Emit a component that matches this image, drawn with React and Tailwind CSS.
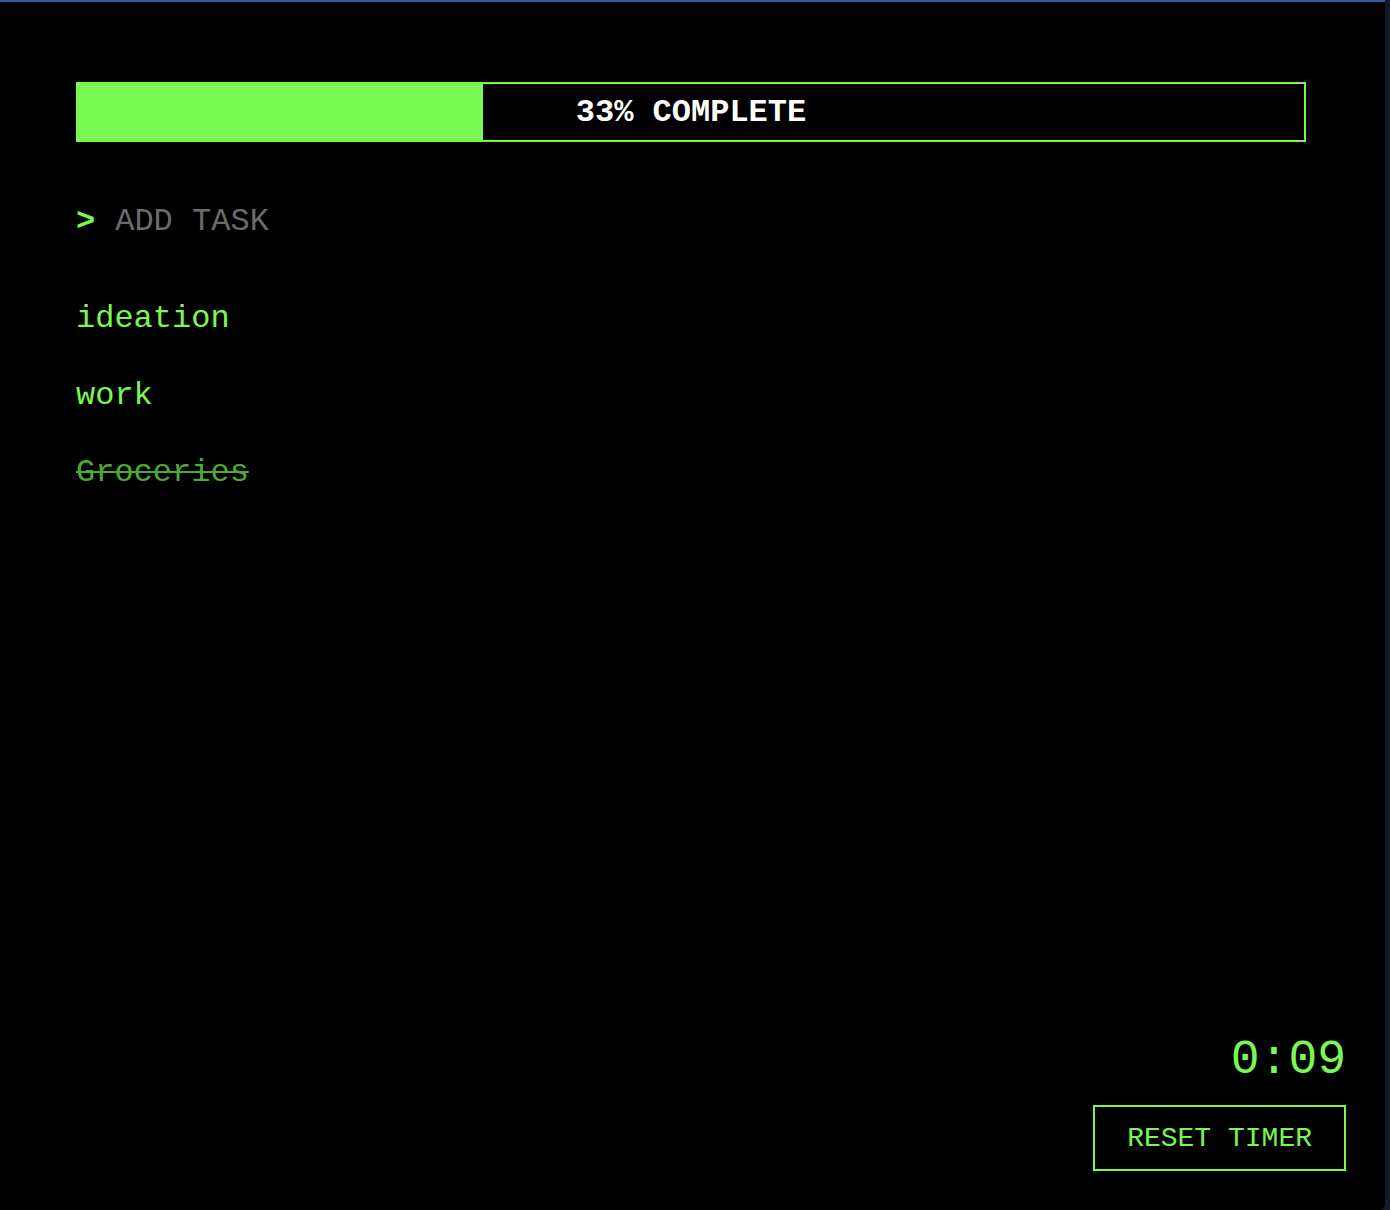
import React, { useState } from 'react';

const GREEN = 'text-[#78f850]';

const App = () => {
    const [tasks] = useState([
        { id: 1, title: 'ideation', done: false },
        { id: 2, title: 'work', done: false },
        { id: 3, title: 'Groceries', done: true },
    ]);

    const doneCount = tasks.filter((t) => t.done).length;
    const percent = Math.round((doneCount / tasks.length) * 100);

    return (
        <div className="min-h-screen bg-[#111a2a] flex font-['Liberation_Mono','Courier_New',monospace]">
            <div className="w-[1385px] h-[1210px] bg-black border-t-2 border-[#2f5da6] rounded-br-[6px] flex flex-col pt-[80px] pl-[76px] pr-[39px] pb-[39px]">

                {/* Progress */}
                <div className="relative w-[1230px] h-[60px] border-2 border-[#78f850]">
                    <div className="absolute top-0 bottom-0 left-0 bg-[#78f850]" style={{ width: `${percent}%` }}></div>
                    <div className="relative h-full flex items-center justify-center pt-[2px] text-white font-bold text-[32px] leading-[36px]">
                        {percent}% COMPLETE
                    </div>
                </div>

                {/* Add task */}
                <div className="mt-[62px] flex items-center text-[32px] leading-[36px]">
                    <span className={`${GREEN} font-bold`}>&gt;</span>
                    <input
                        className="ml-[20px] flex-1 bg-transparent outline-none text-[32px] leading-[36px] text-[#78f850] placeholder:text-[#6b6b6b] font-['Liberation_Mono','Courier_New',monospace]"
                        placeholder="ADD TASK"
                    />
                </div>

                {/* Task list */}
                <div className="mt-[61px] flex flex-col gap-[41px] flex-1">
                    {tasks.map((task) => (
                        <div
                            key={task.id}
                            className={`text-[32px] leading-[36px] ${task.done ? 'text-[#4caa35] line-through decoration-2' : GREEN}`}
                        >
                            {task.title}
                        </div>
                    ))}
                </div>

                {/* Timer */}
                <div className="flex flex-col items-end">
                    <div className={`${GREEN} text-[48px] leading-[54px] pt-[2px]`}>0:09</div>
                    <button className={`mt-[18px] h-[66px] px-[32px] pt-[2px] border-2 border-[#78f850] ${GREEN} text-[28px] leading-[32px] bg-black`}>
                        RESET TIMER
                    </button>
                </div>
            </div>
        </div>
    );
};

export default App;
